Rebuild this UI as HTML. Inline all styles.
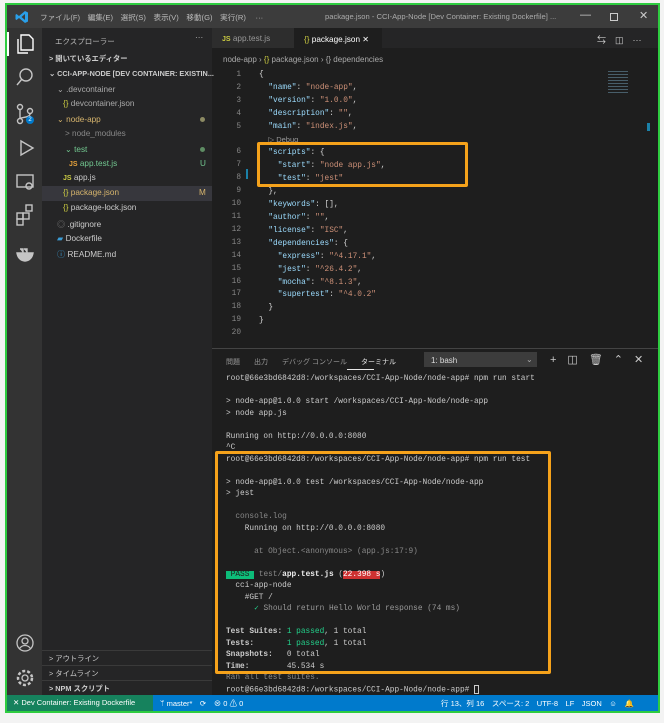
<!DOCTYPE html>
<html><head><meta charset="utf-8"><style>
*{margin:0;padding:0;box-sizing:border-box}
body{width:664px;height:723px;background:#f3f3f3;position:relative;overflow:hidden;font-family:"Liberation Sans","Noto Sans CJK JP",sans-serif}
.a{position:absolute}
.win{left:5px;top:3px;width:655px;height:710px;border:2px solid #2ecc40;background:#1e1e1e;overflow:hidden}
.t{position:absolute;white-space:pre;font-size:8.2px;color:#cccccc}
.m{font-family:"Liberation Mono",monospace;font-size:7.8px;white-space:pre;position:absolute;color:#d4d4d4}
.k{color:#9cdcfe}.s{color:#ce9178}.ln{color:#858585;position:absolute;width:20px;text-align:right;font-family:"Liberation Mono",monospace;font-size:7.8px}
.g{color:#23d18b}
</style></head><body>
<div class="a win">
<div class="a" style="left:0;top:0;width:651px;height:23px;background:#3c3c3c"></div>
<svg class="a" style="left:8px;top:5px" width="14" height="14" viewBox="0 0 14 14"><path d="M10 1 L13 2.5 V11.5 L10 13 L4 8 L1.5 10 L0.5 9.3 V4.7 L1.5 4 L4 6 Z M10 4 L6.5 7 L10 10 Z" fill="#2a9fe8"/></svg>
<div class="t" style="left:33px;top:7px;color:#bbb;font-size:7.6px">ファイル(F)　編集(E)　選択(S)　表示(V)　移動(G)　実行(R)　 ···</div>
<div class="t" style="left:318px;top:7px;color:#aaa;font-size:7.6px">package.json - CCI-App-Node [Dev Container: Existing Dockerfile] ...</div>
<div class="t" style="left:573px;top:4px;color:#ccc;font-size:11px">—</div>
<div class="a" style="left:603px;top:8px;width:8px;height:8px;border:1px solid #ccc"></div>
<div class="t" style="left:632px;top:4px;color:#ccc;font-size:11px">✕</div>
<div class="a" style="left:0;top:23px;width:35px;height:667px;background:#333333"></div>
<div class="a" style="left:0;top:27px;width:2px;height:24px;background:#fff"></div>
<svg class="a" style="left:8px;top:28px" width="20" height="230" viewBox="0 0 20 230" fill="none" stroke="#c5c5c5" stroke-width="1.4">
<path d="M6 2h8l4 4v11h-12z M3 6v14h10" stroke="#fff"/>
<circle cx="11" cy="42" r="6"/><path d="M7 46l-5 6"/>
<circle cx="5" cy="74" r="2.5"/><circle cx="5" cy="88" r="2.5"/><circle cx="15" cy="78" r="2.5"/><path d="M5 77v8M15 81c0 4-10 3-10 5"/>
<path d="M6 108l12 7-12 7z"/>
<rect x="2" y="142" width="16" height="12"/><circle cx="14" cy="153" r="3"/>
<rect x="2" y="180" width="6" height="6"/><rect x="8" y="180" width="6" height="6"/><rect x="2" y="186" width="6" height="6"/><rect x="11" y="172" width="6" height="6"/>
<path d="M2 220h16c-1 6-5 8-8 8s-7-2-8-8z M5 216h3v4M9 216h3v4" fill="#c5c5c5"/>
</svg>
<div class="a" style="left:19px;top:111px;width:8px;height:8px;border-radius:50%;background:#007acc;color:#fff;font-size:6px;text-align:center;line-height:8px">2</div>
<svg class="a" style="left:8px;top:628px" width="20" height="60" viewBox="0 0 20 60" fill="none" stroke="#c5c5c5" stroke-width="1.3"><circle cx="10" cy="10" r="8"/><circle cx="10" cy="8" r="3"/><path d="M4.5 15.5c3-4 8-4 11 0"/><circle cx="10" cy="45" r="3"/><circle cx="10" cy="45" r="7" stroke-dasharray="3 2" stroke-width="2.5"/></svg>
<div class="a" style="left:35px;top:23px;width:170px;height:667px;background:#252526"></div>
<div class="t" style="left:48px;top:31px;font-size:7.5px;color:#bbb">エクスプローラー</div>
<div class="t" style="left:188px;top:28px;color:#bbb">···</div>
<div class="t" style="left:42px;top:49px;font-size:7.3px;font-weight:bold">&gt; 開いているエディター</div>
<div class="t" style="left:42px;top:64px;font-size:7.3px;font-weight:bold">⌄ CCI-APP-NODE [DEV CONTAINER: EXISTIN...</div>
<div class="t" style="left:50px;top:79px;color:#aaa">⌄ .devcontainer</div>
<div class="t" style="left:56px;top:94px;color:#aaa"><span style="color:#cbcb41">{}</span> devcontainer.json</div>
<div class="t" style="left:50px;top:109px;color:#d7b56d">⌄ node-app</div>
<div class="a" style="left:193px;top:112px;width:5px;height:5px;border-radius:50%;background:#8c8a63"></div>
<div class="t" style="left:58px;top:124px;color:#888">&gt; node_modules</div>
<div class="t" style="left:58px;top:139px;color:#73c991">⌄ test</div>
<div class="a" style="left:193px;top:142px;width:5px;height:5px;border-radius:50%;background:#5e8c63"></div>
<div class="t" style="left:62px;top:154px;color:#73c991"><span style="color:#e8a33c;font-size:7px;font-weight:bold">JS</span> app.test.js</div>
<div class="t" style="left:193px;top:154px;color:#73c991">U</div>
<div class="t" style="left:56px;top:168px"><span style="color:#cbcb41;font-size:7px;font-weight:bold">JS</span> app.js</div>
<div class="a" style="left:35px;top:181px;width:170px;height:15px;background:#37373d"></div>
<div class="t" style="left:56px;top:183px;color:#d7b56d"><span style="color:#cbcb41">{}</span> package.json</div>
<div class="t" style="left:192px;top:183px;color:#d7b56d">M</div>
<div class="t" style="left:56px;top:198px"><span style="color:#cbcb41">{}</span> package-lock.json</div>
<div class="t" style="left:50px;top:213px"><span style="color:#777">◎</span> .gitignore</div>
<div class="t" style="left:50px;top:228px"><span style="color:#3b9dd6">▰</span> Dockerfile</div>
<div class="t" style="left:50px;top:243px"><span style="color:#3b9dd6">ⓘ</span> README.md</div>
<div class="a" style="left:35px;top:645px;width:170px;height:1px;background:#3a3a3a"></div>
<div class="t" style="left:42px;top:649px;font-size:7.3px">&gt; アウトライン</div>
<div class="a" style="left:35px;top:660px;width:170px;height:1px;background:#3a3a3a"></div>
<div class="t" style="left:42px;top:664px;font-size:7.3px">&gt; タイムライン</div>
<div class="a" style="left:35px;top:675px;width:170px;height:1px;background:#3a3a3a"></div>
<div class="t" style="left:42px;top:679px;font-size:7.3px;font-weight:bold">&gt; NPM スクリプト</div>
<div class="a" style="left:205px;top:23px;width:446px;height:20px;background:#252526"></div>
<div class="a" style="left:205px;top:23px;width:82px;height:20px;background:#2d2d2d"></div>
<div class="t" style="left:215px;top:29px;color:#999"><span style="color:#cbcb41;font-size:7px;font-weight:bold">JS</span> app.test.js</div>
<div class="a" style="left:287px;top:23px;width:88px;height:20px;background:#1e1e1e"></div>
<div class="t" style="left:297px;top:29px;color:#fff"><span style="color:#cbcb41">{}</span> package.json ✕</div>
<div class="t" style="left:590px;top:28px;color:#ccc;font-size:9px">⇆　◫　···</div>
<div class="t" style="left:216px;top:50px;color:#aaa;font-size:8px">node-app › <span style="color:#cbcb41">{}</span> package.json › {} dependencies</div>
<div class="ln" style="left:214px;top:64px;line-height:12.9px">1<br>2<br>3<br>4<br>5<br><br>6<br>7<br>8<br>9<br>10<br>11<br>12<br>13<br>14<br>15<br>16<br>17<br>18<br>19<br>20</div>
<div class="a" style="left:239px;top:164px;width:2px;height:10px;background:#1b81a8"></div>
<div class="m" style="left:252px;top:64px;line-height:12.9px">{
  <span class="k">"name"</span>: <span class="s">"node-app"</span>,
  <span class="k">"version"</span>: <span class="s">"1.0.0"</span>,
  <span class="k">"description"</span>: <span class="s">""</span>,
  <span class="k">"main"</span>: <span class="s">"index.js"</span>,
  <span style="color:#999;font-family:'Liberation Sans';font-size:7.5px">▷ Debug</span>
  <span class="k">"scripts"</span>: {
    <span class="k">"start"</span>: <span class="s">"node app.js"</span>,
    <span class="k">"test"</span>: <span class="s">"jest"</span>
  },
  <span class="k">"keywords"</span>: [],
  <span class="k">"author"</span>: <span class="s">""</span>,
  <span class="k">"license"</span>: <span class="s">"ISC"</span>,
  <span class="k">"dependencies"</span>: {
    <span class="k">"express"</span>: <span class="s">"^4.17.1"</span>,
    <span class="k">"jest"</span>: <span class="s">"^26.4.2"</span>,
    <span class="k">"mocha"</span>: <span class="s">"^8.1.3"</span>,
    <span class="k">"supertest"</span>: <span class="s">"^4.0.2"</span>
  }
}</div>
<div class="a" style="left:601px;top:66px;width:20px;height:22px;background:repeating-linear-gradient(#5a7a8a 0 1px,transparent 1px 3px);opacity:.7"></div>
<div class="a" style="left:640px;top:118px;width:3px;height:8px;background:#1b81a8"></div>
<div class="a" style="left:250px;top:137px;width:211px;height:45px;border:3px solid #f5a21b;border-radius:2px"></div>
<div class="a" style="left:205px;top:343px;width:446px;height:1px;background:#444"></div>
<div class="t" style="left:219px;top:352px;color:#999;font-size:7px">問題　　出力　　デバッグ コンソール　　<span style="color:#e7e7e7">ターミナル</span></div>
<div class="a" style="left:340px;top:364px;width:27px;height:1px;background:#e7e7e7"></div>
<div class="a" style="left:417px;top:347px;width:113px;height:15px;background:#3c3c3c"></div>
<div class="t" style="left:424px;top:351px;color:#ddd;font-size:8px">1: bash</div>
<div class="t" style="left:519px;top:350px;color:#aaa;font-size:8px">⌄</div>
<div class="t" style="left:543px;top:346px;color:#ccc;font-size:11px">+　◫　🗑　⌃　✕</div>
<div class="m" style="left:219px;top:369px;line-height:11.5px;color:#ccc">root@66e3bd6842d8:/workspaces/CCI-App-Node/node-app# npm run start

&gt; node-app@1.0.0 start /workspaces/CCI-App-Node/node-app
&gt; node app.js

Running on http://0.0.0.0:8080
^C
root@66e3bd6842d8:/workspaces/CCI-App-Node/node-app# npm run test

&gt; node-app@1.0.0 test /workspaces/CCI-App-Node/node-app
&gt; jest

<span style="color:#888">  console.log</span>
    Running on http://0.0.0.0:8080

<span style="color:#888">      at Object.&lt;anonymous&gt; (app.js:17:9)</span>

<span style="background:#0dbc79;color:#1e1e1e"> PASS </span> <span style="color:#888">test/</span><b style="color:#eee">app.test.js</b> (<span style="background:#cd3131;color:#fff">22.398 s</span>)
  cci-app-node
    #GET /
      <span class="g">✓</span><span style="color:#999"> Should return Hello World response (74 ms)</span>

<b>Test Suites: </b><span class="g">1 passed</span>, 1 total
<b>Tests:       </b><span class="g">1 passed</span>, 1 total
<b>Snapshots:   </b>0 total
<b>Time:        </b>45.534 s
<span style="color:#888">Ran all test suites.</span>
root@66e3bd6842d8:/workspaces/CCI-App-Node/node-app# <span style="display:inline-block;width:5px;height:9px;border:1px solid #ccc;vertical-align:middle"></span></div>
<div class="a" style="left:208px;top:446px;width:336px;height:223px;border:3px solid #f5a21b;border-radius:2px"></div>
<div class="a" style="left:0;top:690px;width:651px;height:16px;background:#007acc"></div>
<div class="a" style="left:0;top:690px;width:146px;height:16px;background:#16825d"></div>
<div class="t" style="left:6px;top:693px;color:#fff;font-size:7.5px">✕ Dev Container: Existing Dockerfile</div>
<div class="t" style="left:153px;top:693px;color:#fff;font-size:7.5px">ᛘ master*　⟳　⊗ 0 ⚠ 0</div>
<div class="t" style="left:434px;top:693px;color:#fff;font-size:7.5px">行 13、列 16　スペース: 2　UTF-8　LF　JSON　☺　🔔</div>
</div>
</body></html>
